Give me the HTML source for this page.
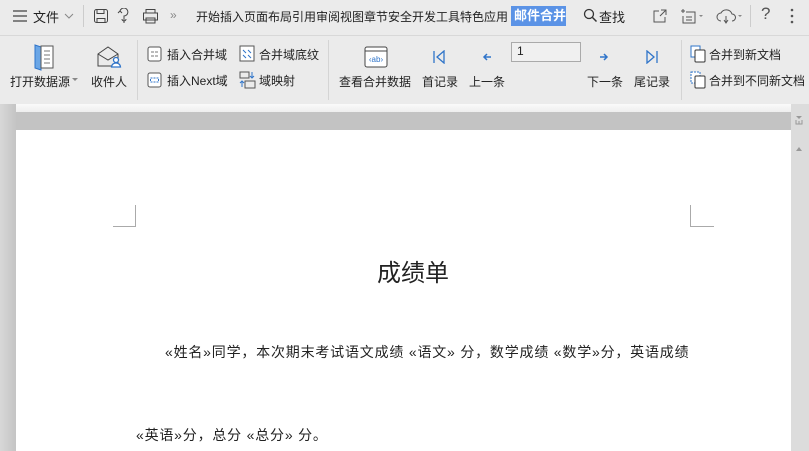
<!DOCTYPE html>
<html><head><meta charset="utf-8"><style>
*{margin:0;padding:0;box-sizing:border-box}
body{width:809px;height:451px;overflow:hidden;background:#fff;font-family:"Liberation Sans","Noto Sans CJK SC",sans-serif;color:#222;position:relative}
.a{position:absolute;white-space:nowrap}
.t{font-size:13px}
.s{font-size:12px}
svg{position:absolute}
</style></head><body>
<div class="a" style="left:0;top:0;width:809px;height:104px;background:#ebebeb"></div>
<div class="a" style="left:0;top:35px;width:809px;height:1px;background:#d8d8d8"></div>
<!-- top row -->
<svg style="left:12px;top:10px" width="16" height="12"><path d="M1 1h14M1 6h14M1 11h14" stroke="#444" stroke-width="1.3"/></svg>
<div class="a t" style="left:33px;top:7px">文件</div>
<svg style="left:64px;top:12px" width="10" height="8"><path d="M1 2l4 4 4-4" stroke="#888" fill="none"/></svg>
<div class="a" style="left:83px;top:5px;width:1px;height:22px;background:#ccc"></div>
<svg style="left:93px;top:8px" width="16" height="16"><rect x="1.5" y="1.5" width="13" height="13" rx="2" stroke="#444" fill="none"/><path d="M4 1.5v4h7v-4M4 14.5v-4h8v4" stroke="#444" fill="none"/></svg>
<svg style="left:117px;top:8px" width="16" height="16"><path d="M3 3a4 4 0 1 1 4 5v7M1 5l2-2 2 2M9 11a2 2 0 1 1-4 0" stroke="#444" fill="none"/></svg>
<svg style="left:142px;top:8px" width="17" height="16"><path d="M4 5V1.5h9V5M1.5 5h14v7h-14zM4 10h9v5H4z" stroke="#444" fill="none"/></svg>
<div class="a s" style="left:170px;top:8px;color:#888">»</div>
<div class="a s" style="left:196px;top:8px;letter-spacing:0">开始插入页面布局引用审阅视图章节安全开发工具特色应用</div>
<div class="a t" style="left:511px;top:6px;width:55px;height:20px;background:#5b93e6;color:#fff;font-weight:bold;padding-left:3px;line-height:20px">邮件合并</div>
<svg style="left:583px;top:8px" width="15" height="16"><circle cx="6" cy="6" r="4.5" stroke="#333" fill="none" stroke-width="1.3"/><path d="M9.5 9.5l4 4" stroke="#333" stroke-width="1.5"/></svg>
<div class="a t" style="left:599px;top:7px">查找</div>
<svg style="left:652px;top:8px" width="16" height="16"><path d="M9 2h5v5M14 2l-6 6M7 3H2v11h11V9" stroke="#555" fill="none"/></svg>
<svg style="left:680px;top:8px" width="28" height="16"><path d="M3 1v4M1 3h4M6 4h9v11H3V8M6 9h6M6 12h6" stroke="#555" fill="none"/><path d="M19 7l2 2 2-2" fill="#888"/></svg>
<svg style="left:716px;top:7px" width="30" height="18"><path d="M5 14a4 4 0 0 1 0-8 6 6 0 0 1 11 1 3.5 3.5 0 0 1 0 7M10 9v7M8 13l2 3 2-3" stroke="#555" fill="none"/><path d="M22 8l2 2 2-2" fill="#888"/></svg>
<div class="a" style="left:750px;top:5px;width:1px;height:22px;background:#ccc"></div>
<div class="a" style="left:761px;top:4px;font-size:17px;color:#555">?</div>
<svg style="left:790px;top:8px" width="4" height="16"><circle cx="2" cy="2" r="1.3" fill="#555"/><circle cx="2" cy="8" r="1.3" fill="#555"/><circle cx="2" cy="14" r="1.3" fill="#555"/></svg>
<!-- ribbon -->
<svg style="left:33px;top:43px" width="22" height="28"><path d="M2 2l6 2v23l-6-2z" fill="#6aa6e6" stroke="#2f74c9"/><rect x="8" y="3" width="12" height="22" fill="#fff" stroke="#555"/><path d="M11 8h6M11 12h6M11 16h6M11 20h6" stroke="#777"/></svg>
<div class="a s" style="left:10px;top:73px">打开数据源</div>
<svg style="left:72px;top:78px" width="6" height="4"><path d="M0 0h6l-3 3z" fill="#888"/></svg>
<svg style="left:96px;top:45px" width="26" height="24"><path d="M2 9l10-7 10 7v12H2zM2 9l10 6 10-6" stroke="#444" fill="none"/><circle cx="20" cy="15" r="2.5" fill="#fff" stroke="#2f74c9" stroke-width="1.3"/><path d="M15.5 22a4.5 4 0 0 1 9 0z" fill="#fff" stroke="#2f74c9" stroke-width="1.3"/></svg>
<div class="a s" style="left:91px;top:73px">收件人</div>
<div class="a" style="left:137px;top:40px;width:1px;height:60px;background:#d4d4d4"></div>
<svg style="left:147px;top:46px" width="15" height="16"><rect x="1" y="1" width="13" height="14" rx="2" stroke="#555" fill="#fff"/><path d="M4 6h3M8 6h3M4 10h3M8 10h3" stroke="#777"/></svg>
<div class="a s" style="left:167px;top:46px">插入合并域</div>
<svg style="left:147px;top:72px" width="15" height="16"><rect x="1" y="1" width="13" height="14" rx="2" stroke="#555" fill="#fff"/><rect x="3.5" y="6" width="8" height="4" stroke="#2f74c9" stroke-dasharray="2 1" fill="none"/></svg>
<div class="a s" style="left:167px;top:72px">插入Next域</div>
<svg style="left:239px;top:45px" width="16" height="17"><rect x="1" y="1" width="14" height="15" stroke="#555" fill="#fff"/><path d="M4 5l3 3M9 5l3 3M4 10l3 3M9 10l3 3" stroke="#2f74c9"/></svg>
<div class="a s" style="left:259px;top:46px">合并域底纹</div>
<svg style="left:239px;top:71px" width="17" height="18"><rect x="1" y="1" width="9" height="6" stroke="#555" fill="none"/><rect x="6" y="10" width="10" height="7" stroke="#555" fill="none"/><path d="M13 1v6M11 5l2 2 2-2M3 10v6M1 12l2-2 2 2" stroke="#2f74c9" fill="none"/></svg>
<div class="a s" style="left:259px;top:72px">域映射</div>
<div class="a" style="left:328px;top:40px;width:1px;height:60px;background:#d4d4d4"></div>
<svg style="left:364px;top:46px" width="24" height="22"><rect x="1" y="1" width="22" height="20" rx="2" stroke="#444" fill="#fff"/><path d="M1 5h22" stroke="#444"/><text x="12" y="16" font-size="8" text-anchor="middle" fill="#2f74c9" font-family="Liberation Sans">‹ab›</text></svg>
<div class="a s" style="left:339px;top:73px">查看合并数据</div>
<svg style="left:432px;top:50px" width="14" height="14"><path d="M2 1v12M12 1L5 7l7 6z" stroke="#2f74c9" fill="none" stroke-width="1.3"/></svg>
<div class="a s" style="left:422px;top:73px">首记录</div>
<svg style="left:482px;top:52px" width="10" height="10"><path d="M9 5H2M5 2L2 5l3 3" stroke="#2f74c9" stroke-width="1.5" fill="none"/></svg>
<div class="a s" style="left:469px;top:73px">上一条</div>
<div class="a" style="left:511px;top:42px;width:70px;height:20px;background:#f0f0f0;border:1px solid #aaa;font-size:12px;padding:1px 5px">1</div>
<svg style="left:599px;top:52px" width="10" height="10"><path d="M1 5h7M5 2l3 3-3 3" stroke="#2f74c9" stroke-width="1.5" fill="none"/></svg>
<div class="a s" style="left:587px;top:73px">下一条</div>
<svg style="left:645px;top:50px" width="14" height="14"><path d="M12 1v12M2 1l7 6-7 6z" stroke="#2f74c9" fill="none" stroke-width="1.3"/></svg>
<div class="a s" style="left:634px;top:73px">尾记录</div>
<div class="a" style="left:681px;top:40px;width:1px;height:60px;background:#d4d4d4"></div>
<svg style="left:690px;top:45px" width="18" height="18"><rect x="1" y="1" width="9" height="11" stroke="#2f74c9" fill="#fff"/><rect x="5" y="5" width="10" height="12" rx="1" stroke="#333" fill="#fff"/></svg>
<div class="a s" style="left:709px;top:46px">合并到新文档</div>
<svg style="left:690px;top:71px" width="18" height="18"><rect x="1" y="1" width="9" height="11" stroke="#2f74c9" fill="#fff" stroke-dasharray="2 1"/><rect x="5" y="5" width="10" height="12" rx="1" stroke="#333" fill="#fff"/></svg>
<div class="a s" style="left:709px;top:72px">合并到不同新文档</div>
<!-- document area -->
<div class="a" style="left:0;top:104px;width:16px;height:347px;background:linear-gradient(90deg,#d8d8d8,#c4c4c4)"></div>
<div class="a" style="left:16px;top:104px;width:775px;height:8px;background:linear-gradient(#fafafa,#eee)"></div>
<div class="a" style="left:16px;top:112px;width:775px;height:18px;background:#c3c3c3"></div>
<div class="a" style="left:791px;top:104px;width:18px;height:347px;background:#dcdcdc"></div>
<svg style="left:793px;top:115px" width="12" height="45"><path d="M3 1h6L6 4z" fill="#999"/><path d="M3 5v4h6V5M6 6v3" stroke="#999" fill="none"/><path d="M3 36h6l-3-4z" fill="#999"/></svg>
<div class="a" style="left:113px;top:205px;width:23px;height:22px;border-right:1px solid #aaa;border-bottom:1px solid #aaa"></div>
<div class="a" style="left:690px;top:205px;width:24px;height:22px;border-left:1px solid #aaa;border-bottom:1px solid #aaa"></div>
<div class="a" style="left:377px;top:253px;font-size:24px">成绩单</div>
<div class="a" style="left:165px;top:342px;font-size:14px;letter-spacing:0.8px">«姓名»同学，本次期末考试语文成绩 «语文» 分，数学成绩 «数学»分，英语成绩</div>
<div class="a" style="left:136px;top:425px;font-size:14px;letter-spacing:0.8px">«英语»分，总分 «总分» 分。</div>
</body></html>
